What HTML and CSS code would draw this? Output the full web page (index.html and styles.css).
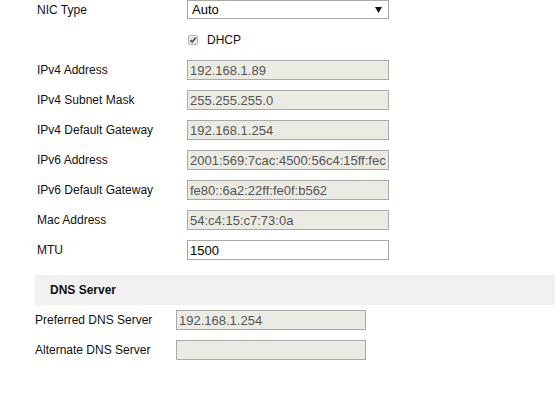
FILE: index.html
```html
<!DOCTYPE html>
<html>
<head>
<meta charset="utf-8">
<link rel="stylesheet" href="styles.css">
</head>
<body>
<div class="page">
  <div class="form">
    <div class="row">
      <span class="label">NIC Type</span>
      <div class="select"><span>Auto</span><svg class="arrow" width="7" height="6" viewBox="0 0 7 6"><path d="M0 0H7L3.5 6Z" fill="#111"/></svg></div>
    </div>
    <div class="row">
      <span class="label"></span>
      <span class="check"><svg width="8" height="8" viewBox="0 0 9 9"><path d="M1.5 4.6L3.6 6.8L7.6 1.8" fill="none" stroke="#555" stroke-width="1.9"/></svg></span>
      <span class="check-label">DHCP</span>
    </div>
    <div class="row"><span class="label">IPv4 Address</span><input class="field" disabled value="192.168.1.89"></div>
    <div class="row"><span class="label">IPv4 Subnet Mask</span><input class="field" disabled value="255.255.255.0"></div>
    <div class="row"><span class="label">IPv4 Default Gateway</span><input class="field" disabled value="192.168.1.254"></div>
    <div class="row"><span class="label">IPv6 Address</span><input class="field" disabled value="2001:569:7cac:4500:56c4:15ff:fec4:c773"></div>
    <div class="row"><span class="label">IPv6 Default Gateway</span><input class="field" disabled value="fe80::6a2:22ff:fe0f:b562"></div>
    <div class="row"><span class="label">Mac Address</span><input class="field" disabled value="54:c4:15:c7:73:0a"></div>
    <div class="row"><span class="label">MTU</span><input class="field editable" value="1500"></div>
  </div>
  <div class="section-head">DNS Server</div>
  <div class="form dns">
    <div class="row"><span class="label">Preferred DNS Server</span><input class="field" disabled value="192.168.1.254"></div>
    <div class="row"><span class="label">Alternate DNS Server</span><input class="field" disabled value=""></div>
  </div>
</div>
</body>
</html>
```
FILE: styles.css
```css
* { box-sizing: border-box; }
html, body { margin: 0; padding: 0; background: #fff; }
body { font-family: "Liberation Sans", Arial, sans-serif; font-size: 12px; color: #222; }
.page { padding-left: 35px; }
.form { display: flex; flex-direction: column; gap: 10px; padding-left: 2px; }
.row { display: flex; align-items: center; height: 20px; }
.label { width: 150px; flex: none; line-height: 20px; color: #111; }
.select {
  width: 202px; height: 19px; border: 1px solid #a9a9a9; background: #fff;
  display: flex; align-items: center; justify-content: space-between;
  padding: 0 6px 0 4px; font-size: 13px; color: #000; align-self: flex-start;
}
.arrow { display: block; margin-top: 1px; }
.check {
  width: 10px; height: 10px; margin-left: 1px; border: 1px solid #b5b5b5; border-radius: 2px;
  background: #e8e8e8; display: flex; align-items: center; justify-content: center;
}
.check-label { margin-left: 9px; color: #111; }
.field {
  width: 202px; height: 20px; border: 1px solid #a9a9a9; background: #ebebe4;
  font-family: "Liberation Sans", Arial, sans-serif; font-size: 13px; color: #545454;
  padding: 0 2px; margin: 0; outline: none; border-radius: 0;
}
.field.editable { background: #fff; color: #000; }
.section-head {
  margin-top: 15px; height: 30px; background: #f1f1f1; font-weight: bold;
  padding-left: 15px; display: flex; align-items: center; color: #111; margin-bottom: 5px;
}
.dns { padding-left: 0; }
.dns .label { width: 141px; }
.dns .field { width: 190px; }
```
